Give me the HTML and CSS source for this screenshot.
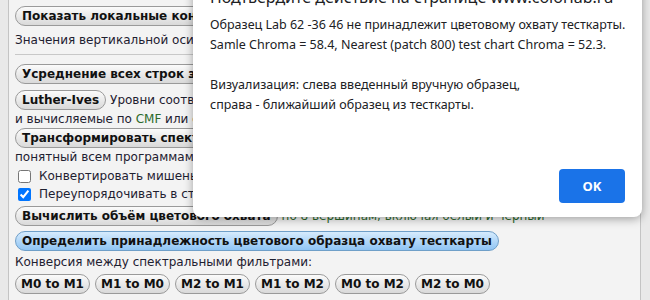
FILE: index.html
```html
<!DOCTYPE html>
<html lang="ru">
<head>
    <meta charset="UTF-8">
    <title>Тесткарта</title>
    <link rel="stylesheet" href="styles.css">
</head>
<body>

    <!-- Main tool panel -->
    <div class="panel">
        <div class="row"><button class="btn">Показать локальные контрасты</button></div>
        <p class="line first">Значения вертикальной оси в единицах dE2000</p>
        <hr>

        <div class="row"><button class="btn">Усреднение всех строк замеров</button></div>
        <div class="row gap"><button class="btn">Luther-Ives</button> Уровни соответствия, измеренные</div>
        <p class="line">и вычисляемые по <span class="green">CMF</span> или спектрам</p>
        <div class="row"><button class="btn">Трансформировать спектры в формат</button></div>
        <p class="line">понятный всем программам обработки</p>
        <label class="check"><input type="checkbox"> Конвертировать мишень в Lab</label>
        <label class="check"><input type="checkbox" checked> Переупорядочивать в стандартный вид</label>

        <div class="row volume"><button class="btn">Вычислить объём цветового охвата</button> <span class="green">по 8 вершинам, включая белый и черный</span></div>
        <div class="row gamut"><button class="btn blue">Определить принадлежность цветового образца охвату тесткарты</button></div>
        <p class="line">Конверсия между спектральными фильтрами:</p>
        <div class="row btn-group">
            <button class="btn">M0 to M1</button>
            <button class="btn">M1 to M0</button>
            <button class="btn">M2 to M1</button>
            <button class="btn">M1 to M2</button>
            <button class="btn">M0 to M2</button>
            <button class="btn">M2 to M0</button>
        </div>
    </div>

    <!-- Browser confirm dialog -->
    <div class="dialog">
        <div class="dialog-title">Подтвердите действие на странице www.colorlab.ru</div>
        <p>Образец Lab 62 -36 46 не принадлежит цветовому охвату тесткарты.<br>
        Samle Chroma = 58.4, Nearest (patch 800) test chart Chroma = 52.3.</p>
        <p>Визуализация: слева введенный вручную образец,<br>
        справа - ближайший образец из тесткарты.</p>
        <div class="dialog-actions"><button class="ok-btn">OK</button></div>
    </div>

</body>
</html>
```

FILE: styles.css
```css
/* Basic reset */
* {
    margin: 0;
    padding: 0;
    box-sizing: border-box;
}

body {
    height: 300px;
    overflow: hidden;
    background-color: #e9e9e9;
    font-family: "DejaVu Sans", Verdana, sans-serif;
    font-size: 12px;
    color: #1e2030;
    padding-left: 8px;
    padding-right: 9px;
}

/* Panel */
.panel {
    height: 300px;
    background-color: #f3f3f3;
    border-left: 1px solid #c4c4c4;
    border-right: 1px solid #c4c4c4;
    padding: 6px 0 0 6px;
    white-space: nowrap;
    overflow: hidden;
}

.row {
    display: flex;
    align-items: center;
    gap: 4px;
    height: 20px;
}
.row.gap {
    margin-top: 6px;
}
.row.volume {
    margin-top: 3px;
}
.row.gamut {
    margin-top: 5px;
}

.line {
    height: 18px;
    line-height: 18px;
    margin-top: 1px;
}
.row + .line {
    margin-top: 0;
}
.row + .line.first {
    margin-top: 5px;
}
.row.gamut + .line {
    margin-top: 2px;
}

hr {
    border: none;
    border-top: 1px solid #c8c8c8;
    margin: 5px 0 9px 0;
    width: 610px;
}

.green {
    color: #2c6a2c;
}

/* Pill buttons */
.btn {
    height: 20px;
    padding: 0 6px;
    font-family: "DejaVu Sans", Verdana, sans-serif;
    font-size: 12px;
    font-weight: bold;
    color: #111;
    background: linear-gradient(#fbfbfb, #d9d9d9);
    border: 1px solid #9a9a9a;
    border-radius: 10px;
    white-space: nowrap;
}
.btn.blue {
    background: linear-gradient(#d6ebfd, #8fc4f4);
    border-color: #6f9fc8;
}

.btn-group {
    margin-top: 3px;
    gap: 5px;
}
.btn-group .btn {
    width: 75px;
    padding: 0;
}

/* Checkboxes */
.check {
    display: flex;
    align-items: center;
    gap: 8px;
    height: 18px;
    margin-top: 1px;
    padding-left: 3px;
}
.check + .check {
    margin-top: 0;
}
.check input {
    width: 13px;
    height: 13px;
}

/* Dialog */
.dialog {
    position: absolute;
    left: 193px;
    top: -29px;
    width: 449px;
    height: 246px;
    background-color: #fff;
    border-radius: 8px;
    box-shadow: 0 2px 10px rgba(0, 0, 0, 0.35);
    padding: 16px 17px 14px 17px;
    font-family: "Noto Sans", "Open Sans", sans-serif;
    font-size: 12.5px;
    color: #202124;
    display: flex;
    flex-direction: column;
    white-space: nowrap;
}
.dialog-title {
    font-size: 16px;
    line-height: 20px;
    height: 28px;
}
.dialog p {
    line-height: 20px;
    margin-bottom: 20px;
}
.dialog-actions {
    margin-top: auto;
    display: flex;
    justify-content: flex-end;
}
.ok-btn {
    width: 66px;
    height: 34px;
    border: none;
    border-radius: 4px;
    background-color: #1a73e8;
    color: #fff;
    font-family: "Noto Sans", sans-serif;
    font-size: 13px;
    font-weight: bold;
}
```
